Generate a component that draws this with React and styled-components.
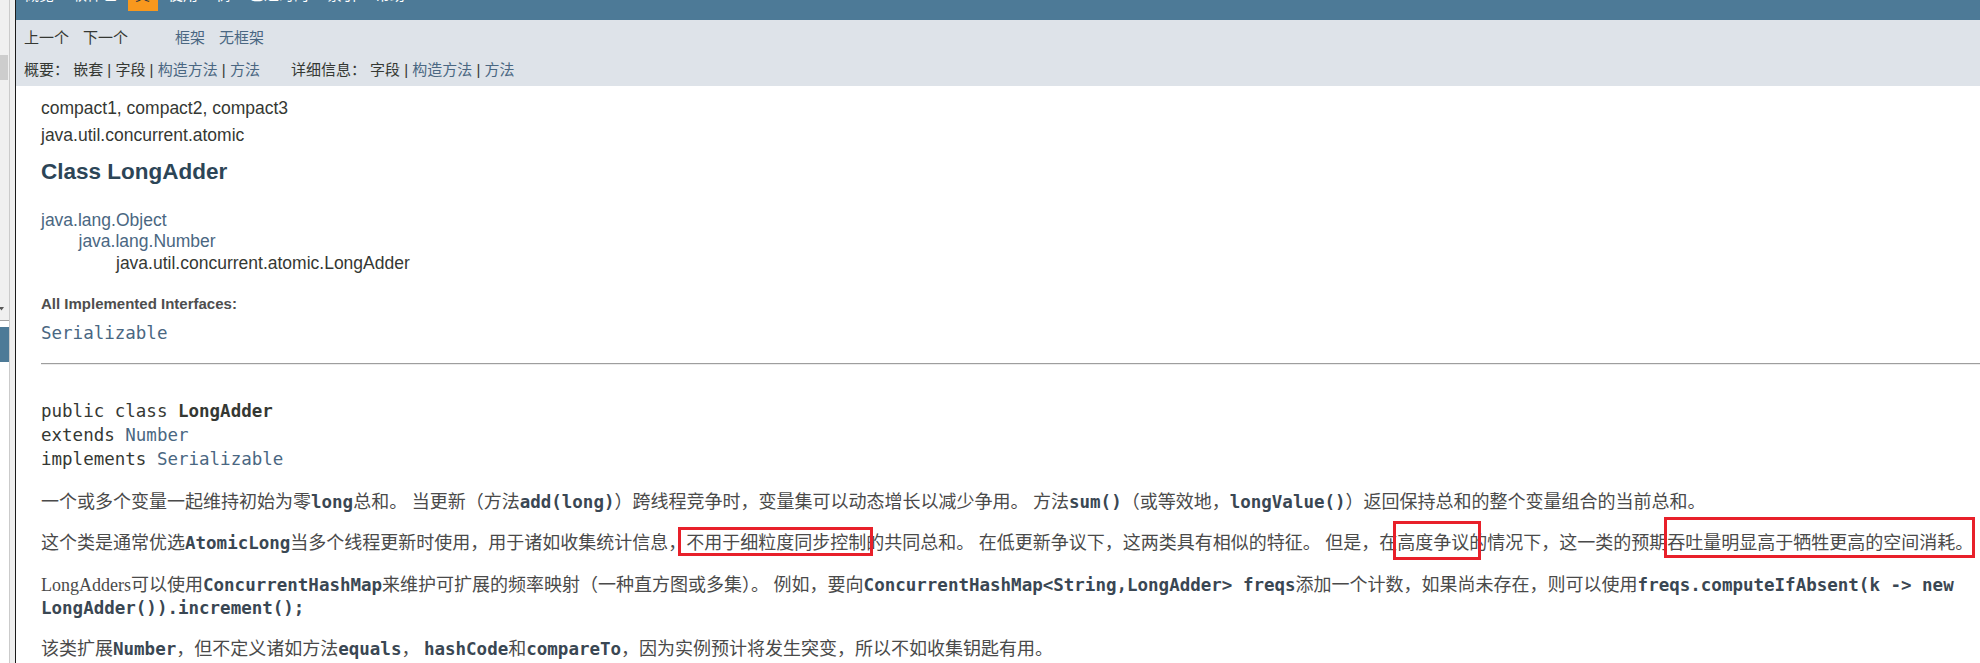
import styled, { createGlobalStyle } from "styled-components";

const SANS = `"Liberation Sans", "Noto Sans CJK SC", sans-serif`;
const MONO = `"DejaVu Sans Mono", "Noto Sans CJK SC", monospace`;
const BODY = `"Liberation Serif", "Noto Sans CJK SC", serif`;

const GlobalStyle = createGlobalStyle`
  html, body {
    margin: 0;
    padding: 0;
    background: #fff;
    overflow: hidden;
  }
  body {
    font-family: ${SANS};
  }
`;

const topLinks = ["概览", "软件包", "类", "使用", "树", "已过时的", "索引", "帮助"];

function App() {
  return (
    <>
      <GlobalStyle />
      <Screen>
        <LeftFrame>
          <SidePane>
            <SideTop>
              <Thumb />
              <ArrowRow>
                <svg width="5" height="4" viewBox="0 0 5 4">
                  <path d="M0 0 L5 0 L2.5 3.5 Z" fill="#5a5a5a" />
                </svg>
              </ArrowRow>
            </SideTop>
            <SideGap />
            <SideBar />
            <SideRest />
          </SidePane>
          <FrameLine />
          <FrameGap />
          <FrameEdge />
        </LeftFrame>

        <Main>
          <TopNav>
            {topLinks.map((t) => (
              <NavItem key={t} $active={t === "类"}>
                {t}
              </NavItem>
            ))}
          </TopNav>

          <SubNav>
            <SubRow>
              <NavGroup>
                <span>上一个</span>
                <span>下一个</span>
              </NavGroup>
              <NavGroup $offset={47}>
                <Link>框架</Link>
                <Link>无框架</Link>
              </NavGroup>
            </SubRow>
            <SubRow>
              <span>
                概要：&nbsp;嵌套 | 字段 | <Link>构造方法</Link> | <Link>方法</Link>
              </span>
              <Detail>
                详细信息：&nbsp;字段 | <Link>构造方法</Link> | <Link>方法</Link>
              </Detail>
            </SubRow>
          </SubNav>

          <Content>
            <Profile>compact1, compact2, compact3</Profile>
            <Pkg>java.util.concurrent.atomic</Pkg>
            <Title>Class LongAdder</Title>

            <Inheritance>
              <InheritLine $level={0}>
                <Link>java.lang.Object</Link>
              </InheritLine>
              <InheritLine $level={1}>
                <Link>java.lang.Number</Link>
              </InheritLine>
              <InheritLine $level={2}>java.util.concurrent.atomic.LongAdder</InheritLine>
            </Inheritance>

            <Label>All Implemented Interfaces:</Label>
            <Iface>
              <Link>Serializable</Link>
            </Iface>

            <Rule />

            <Signature>
              public class <b>LongAdder</b>
              {"\n"}extends <Link>Number</Link>
              {"\n"}implements <Link>Serializable</Link>
            </Signature>

            <Description>
              <Para>
                一个或多个变量一起维持初始为零<Code>long</Code>总和。 当更新（方法<Code>add(long)</Code>）跨线程竞争时，变量集可以动态增长以减少争用。 方法<Code>sum()</Code>（或等效地，<Code>longValue()</Code>）返回保持总和的整个变量组合的当前总和。
              </Para>
              <Para $nowrap>
                这个类是通常优选<Code>AtomicLong</Code>当多个线程更新时使用，用于诸如收集统计信息，
                <Mark $l={-8} $r={-7} $t={-6} $b={-3}>不用于细粒度同步控制</Mark>
                的共同总和。 在低更新争议下，这两类具有相似的特征。 但是，在
                <Mark $l={-4} $r={-12} $t={-12} $b={-7}>高度争议</Mark>
                的情况下，这一类的预期
                <Mark $l={-3} $r={-2} $t={-16} $b={-5}>吞吐量明显高于牺牲更高的空间消耗。</Mark>
              </Para>
              <Para>
                LongAdders可以使用<Code>ConcurrentHashMap</Code>来维护可扩展的频率映射（一种直方图或多集）。 例如，要向<Code>ConcurrentHashMap&lt;String,LongAdder&gt; freqs</Code>添加一个计数，如果尚未存在，则可以使用<Code>freqs.computeIfAbsent(k -&gt; new LongAdder()).increment();</Code>
              </Para>
              <Para>
                该类扩展<Code>Number</Code>，但不定义诸如方法<Code>equals</Code>， <Code>hashCode</Code>和<Code>compareTo</Code>，因为实例预计将发生突变，所以不如收集钥匙有用。
              </Para>
            </Description>
          </Content>
        </Main>
      </Screen>
    </>
  );
}

const Screen = styled.div`
  display: flex;
  width: 1980px;
  height: 663px;
  overflow: hidden;
`;

const LeftFrame = styled.div`
  flex: 0 0 16px;
  display: flex;
`;

const SidePane = styled.div`
  width: 9px;
  display: flex;
  flex-direction: column;
`;

const SideTop = styled.div`
  height: 321px;
  box-sizing: border-box;
  background: #f0f0f0;
  border-bottom: 1px solid #a3a3a3;
  padding-top: 55px;
  display: flex;
  flex-direction: column;
`;

const Thumb = styled.div`
  width: 8px;
  height: 25px;
  background: #cdcdcd;
`;

const ArrowRow = styled.div`
  margin-top: auto;
  margin-bottom: 9px;
  line-height: 0;

  svg {
    display: block;
    margin-left: -1px;
  }
`;

const SideGap = styled.div`
  height: 6px;
  background: #fff;
`;

const SideBar = styled.div`
  height: 35px;
  background: #4d7a97;
`;

const SideRest = styled.div`
  flex: 1;
  background: #fff;
`;

const FrameLine = styled.div`
  width: 1px;
  background: #cbcbcb;
`;

const FrameGap = styled.div`
  width: 5px;
  background: #efefef;
`;

const FrameEdge = styled.div`
  width: 1px;
  background: #1b1b1b;
`;

const Main = styled.div`
  flex: 1;
  min-width: 0;
  display: flex;
  flex-direction: column;
`;

const TopNav = styled.ul`
  list-style: none;
  margin: -20px 0 0;
  height: 40px;
  box-sizing: border-box;
  padding: 1px 0 0 0.5px;
  background: #4d7a97;
  display: flex;
  align-items: flex-start;
  gap: 3px;
  flex-shrink: 0;
`;

const NavItem = styled.li`
  padding: 5px 7.5px 7px;
  font-size: 15px;
  line-height: 18px;
  color: ${(p) => (p.$active ? "#253441" : "#fff")};
  background: ${(p) => (p.$active ? "#f8981d" : "transparent")};
`;

const SubNav = styled.div`
  height: 66px;
  box-sizing: border-box;
  flex-shrink: 0;
  background: #dee3e9;
  padding: 9px 0 0 8px;
  display: flex;
  flex-direction: column;
  gap: 14px;
  font-size: 15px;
  line-height: 18px;
  color: #353833;
`;

const SubRow = styled.div`
  display: flex;
  align-items: center;
  height: 18px;
  white-space: pre;
`;

const NavGroup = styled.div`
  display: flex;
  gap: 14px;
  margin-left: ${(p) => p.$offset || 0}px;
`;

const Detail = styled.span`
  margin-left: 31px;
`;

const Link = styled.a`
  color: #4a6782;
  text-decoration: none;
`;

const Content = styled.div`
  padding: 0 0 0 25px;
  color: #353833;
  font-size: 17.5px;
`;

const Profile = styled.div`
  margin-top: 12px;
  line-height: 20px;
`;

const Pkg = styled.div`
  margin-top: 7px;
  line-height: 20px;
`;

const Title = styled.h2`
  margin: 12.5px 0 0;
  font-size: 22.5px;
  line-height: 27px;
  font-weight: 700;
  color: #2c4557;
`;

const Inheritance = styled.div`
  margin-top: 25px;
`;

const InheritLine = styled.div`
  line-height: 21.5px;
  padding-left: ${(p) => p.$level * 37.5}px;
`;

const Label = styled.div`
  margin-top: 20.5px;
  font-size: 15px;
  line-height: 18px;
  font-weight: 700;
  color: #4e4e4e;
`;

const Iface = styled.div`
  margin-top: 9px;
  line-height: 22px;
  font-family: ${MONO};
`;

const Rule = styled.hr`
  margin: 19px 0 0;
  height: 0;
  border: none;
  border-top: 1px solid #9e9e9e;
  border-bottom: 1px solid #ececec;
`;

const Signature = styled.pre`
  margin: 34px 0 0;
  font-family: ${MONO};
  font-size: 17.5px;
  line-height: 24px;
  color: #353833;

  b {
    font-weight: 700;
  }
`;

const Description = styled.div`
  margin-top: 20px;
  font-family: ${BODY};
  font-size: 18px;
  color: #4a4a4a;
`;

const Para = styled.p`
  margin: 0;
  line-height: 23px;
  white-space: ${(p) => (p.$nowrap ? "nowrap" : "normal")};

  & + & {
    margin-top: 18.5px;
  }
`;

const Code = styled.code`
  font-family: ${MONO};
  font-size: 17.5px;
  font-weight: 700;
  color: #3a4753;
`;

const Mark = styled.span`
  position: relative;

  &::after {
    content: "";
    position: absolute;
    left: ${(p) => p.$l}px;
    right: ${(p) => p.$r}px;
    top: ${(p) => p.$t}px;
    bottom: ${(p) => p.$b}px;
    border: 3px solid #e8202a;
    pointer-events: none;
  }
`;

export default App;
